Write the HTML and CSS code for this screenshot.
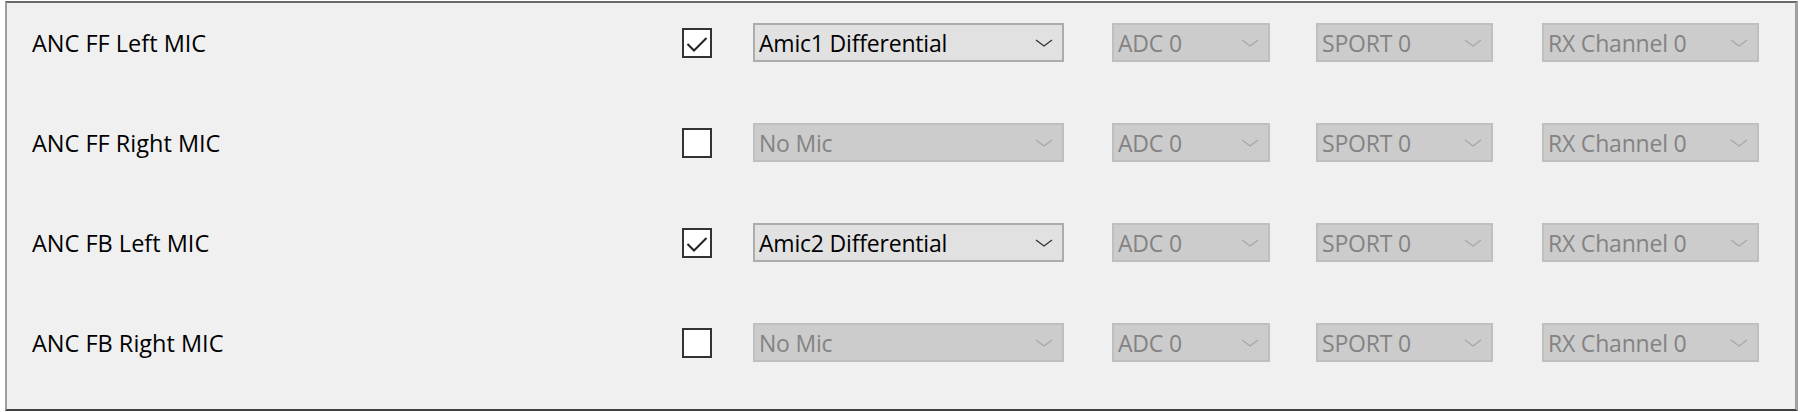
FILE: index.html
```html
<!DOCTYPE html>
<html>
<head>
<meta charset="utf-8">
<link rel="stylesheet" href="styles.css">
</head>
<body>
<div class="frame">
  <div class="row">
    <div class="label">ANC FF Left MIC</div>
    <div class="cbcell"><span class="cb"><svg viewBox="0 0 30 30" width="30" height="30"><polyline points="5.5,16 12,22.5 24.5,10" fill="none" stroke="#222" stroke-width="2"/></svg></span></div>
    <div class="cell c-mic"><div class="combo enabled"><span class="txt">Amic1 Differential</span><svg class="chev" viewBox="0 0 18 8" width="18" height="8"><polyline points="1,1 9,7 17,1" fill="none" stroke-width="1.3"/></svg></div></div>
    <div class="cell c-adc"><div class="combo disabled"><span class="txt">ADC 0</span><svg class="chev" viewBox="0 0 18 8" width="18" height="8"><polyline points="1,1 9,7 17,1" fill="none" stroke-width="1.2"/></svg></div></div>
    <div class="cell c-sport"><div class="combo disabled"><span class="txt">SPORT 0</span><svg class="chev" viewBox="0 0 18 8" width="18" height="8"><polyline points="1,1 9,7 17,1" fill="none" stroke-width="1.2"/></svg></div></div>
    <div class="cell c-rx"><div class="combo disabled"><span class="txt">RX Channel 0</span><svg class="chev" viewBox="0 0 18 8" width="18" height="8"><polyline points="1,1 9,7 17,1" fill="none" stroke-width="1.2"/></svg></div></div>
  </div>
  <div class="row">
    <div class="label">ANC FF Right MIC</div>
    <div class="cbcell"><span class="cb"></span></div>
    <div class="cell c-mic"><div class="combo disabled"><span class="txt">No Mic</span><svg class="chev" viewBox="0 0 18 8" width="18" height="8"><polyline points="1,1 9,7 17,1" fill="none" stroke-width="1.2"/></svg></div></div>
    <div class="cell c-adc"><div class="combo disabled"><span class="txt">ADC 0</span><svg class="chev" viewBox="0 0 18 8" width="18" height="8"><polyline points="1,1 9,7 17,1" fill="none" stroke-width="1.2"/></svg></div></div>
    <div class="cell c-sport"><div class="combo disabled"><span class="txt">SPORT 0</span><svg class="chev" viewBox="0 0 18 8" width="18" height="8"><polyline points="1,1 9,7 17,1" fill="none" stroke-width="1.2"/></svg></div></div>
    <div class="cell c-rx"><div class="combo disabled"><span class="txt">RX Channel 0</span><svg class="chev" viewBox="0 0 18 8" width="18" height="8"><polyline points="1,1 9,7 17,1" fill="none" stroke-width="1.2"/></svg></div></div>
  </div>
  <div class="row">
    <div class="label">ANC FB Left MIC</div>
    <div class="cbcell"><span class="cb"><svg viewBox="0 0 30 30" width="30" height="30"><polyline points="5.5,16 12,22.5 24.5,10" fill="none" stroke="#222" stroke-width="2"/></svg></span></div>
    <div class="cell c-mic"><div class="combo enabled"><span class="txt">Amic2 Differential</span><svg class="chev" viewBox="0 0 18 8" width="18" height="8"><polyline points="1,1 9,7 17,1" fill="none" stroke-width="1.3"/></svg></div></div>
    <div class="cell c-adc"><div class="combo disabled"><span class="txt">ADC 0</span><svg class="chev" viewBox="0 0 18 8" width="18" height="8"><polyline points="1,1 9,7 17,1" fill="none" stroke-width="1.2"/></svg></div></div>
    <div class="cell c-sport"><div class="combo disabled"><span class="txt">SPORT 0</span><svg class="chev" viewBox="0 0 18 8" width="18" height="8"><polyline points="1,1 9,7 17,1" fill="none" stroke-width="1.2"/></svg></div></div>
    <div class="cell c-rx"><div class="combo disabled"><span class="txt">RX Channel 0</span><svg class="chev" viewBox="0 0 18 8" width="18" height="8"><polyline points="1,1 9,7 17,1" fill="none" stroke-width="1.2"/></svg></div></div>
  </div>
  <div class="row">
    <div class="label">ANC FB Right MIC</div>
    <div class="cbcell"><span class="cb"></span></div>
    <div class="cell c-mic"><div class="combo disabled"><span class="txt">No Mic</span><svg class="chev" viewBox="0 0 18 8" width="18" height="8"><polyline points="1,1 9,7 17,1" fill="none" stroke-width="1.2"/></svg></div></div>
    <div class="cell c-adc"><div class="combo disabled"><span class="txt">ADC 0</span><svg class="chev" viewBox="0 0 18 8" width="18" height="8"><polyline points="1,1 9,7 17,1" fill="none" stroke-width="1.2"/></svg></div></div>
    <div class="cell c-sport"><div class="combo disabled"><span class="txt">SPORT 0</span><svg class="chev" viewBox="0 0 18 8" width="18" height="8"><polyline points="1,1 9,7 17,1" fill="none" stroke-width="1.2"/></svg></div></div>
    <div class="cell c-rx"><div class="combo disabled"><span class="txt">RX Channel 0</span><svg class="chev" viewBox="0 0 18 8" width="18" height="8"><polyline points="1,1 9,7 17,1" fill="none" stroke-width="1.2"/></svg></div></div>
  </div>
</div>
</body>
</html>
```

FILE: styles.css
```css
html, body {
  margin: 0;
  padding: 0;
  background: #ffffff;
}
body {
  font-family: "Open Sans", "Noto Sans", "Liberation Sans", sans-serif;
  width: 1803px;
  height: 412px;
  overflow: hidden;
}
.frame {
  box-sizing: border-box;
  margin: 1px 0 0 5px;
  width: 1793px;
  height: 410px;
  background: #f0f0f0;
  border-top: 2px solid #6a6a6a;
  border-left: 2px solid #a0a0a0;
  border-right: 3px solid #a0a0a0;
  border-bottom: 2px solid #404040;
  padding: 20px 0 0 25px;
  display: flex;
  flex-direction: column;
  gap: 61px;
}
.row {
  display: grid;
  grid-template-columns: 650px 71px 359px 204px 226px 217px;
  align-items: center;
  height: 39px;
}
.label {
  font-size: 23.5px;
  color: #000;
  white-space: nowrap;
}
.cb {
  display: block;
  box-sizing: border-box;
  width: 30px;
  height: 30px;
  background: #fff;
  border: 2px solid #333;
  position: relative;
}
.cb svg {
  position: absolute;
  left: -2px;
  top: -2px;
}
.combo {
  box-sizing: border-box;
  height: 39px;
  display: flex;
  align-items: center;
  justify-content: space-between;
  padding: 0 9px 0 4px;
  font-size: 23px;
  letter-spacing: -0.2px;
  border: 2px solid;
}
.c-mic .combo { width: 311px; }
.c-adc .combo { width: 158px; }
.c-sport .combo { width: 177px; }
.c-rx .combo { width: 217px; }
.combo.enabled {
  background: #e1e1e1;
  border-color: #adadad;
  color: #000;
}
.combo.enabled .chev polyline { stroke: #333; }
.combo.disabled {
  background: #cccccc;
  border-color: #bfbfbf;
  color: #838383;
}
.combo.disabled .chev polyline { stroke: #a6a6a6; }
.txt { white-space: nowrap; }
.chev { flex: none; }
```
